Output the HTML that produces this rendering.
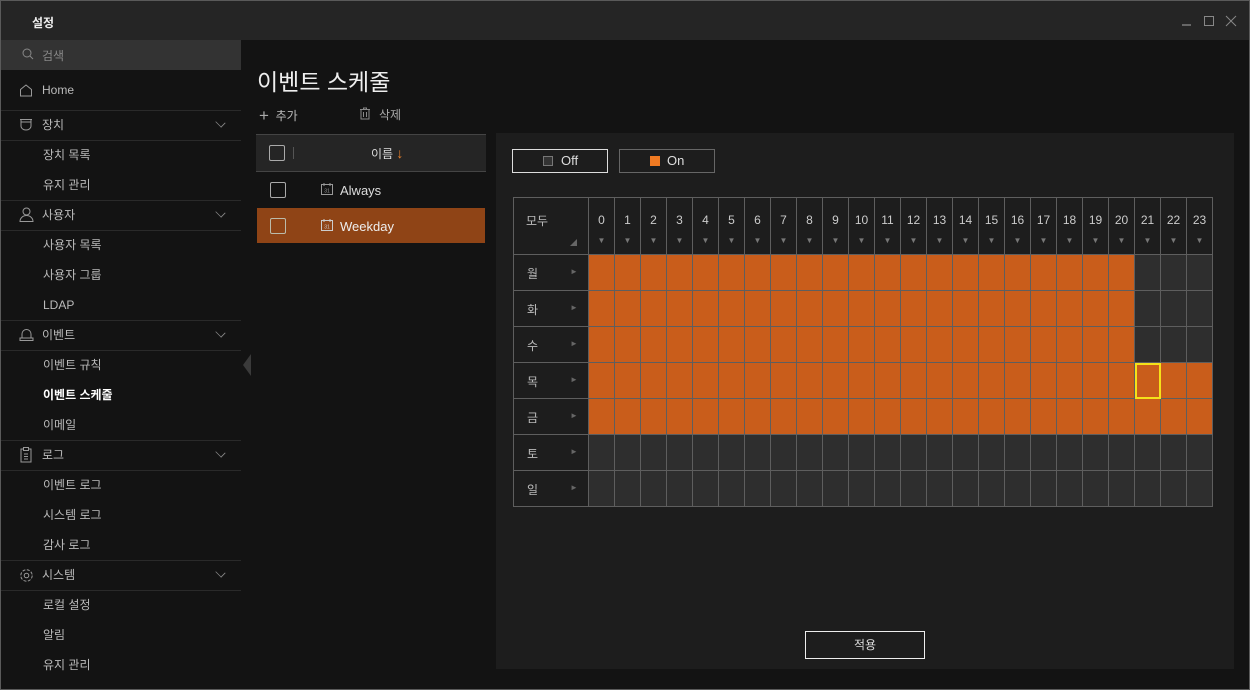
<!DOCTYPE html>
<html><head><meta charset="utf-8"><style>
*{box-sizing:border-box;margin:0;padding:0}
body{width:1250px;height:690px;background:#131313;font-family:"Liberation Sans","Noto Sans CJK KR",sans-serif;color:#ccc;position:relative;overflow:hidden;font-size:12px}
.a{position:absolute}
#win{position:absolute;left:0;top:0;width:1250px;height:690px;border:1px solid #5a5a5a;pointer-events:none}
.title{left:0;top:0;width:1250px;height:40px;background:#252525}
.side{left:0;top:40px;width:241px;height:650px;background:#131313}
.it{position:absolute;left:0;width:241px;height:30px;line-height:30px;font-size:12px;color:#bbb}
.cat{padding-left:42px}
.sub{padding-left:43px}
.ln{position:absolute;left:0;width:241px;height:1px;background:#2a2a2a}
.chev{position:absolute;right:16px;top:8px;width:9px;height:9px;border-right:1px solid #888;border-bottom:1px solid #888;transform:rotate(45deg) scale(.9,.7)}
table{border-collapse:collapse;table-layout:fixed}
td{border:1px solid #5e5e5e;padding:0}
</style></head><body>
<div class="a title"></div>
<div class="a" style="left:32px;top:14px;color:#eee;font-size:12px;font-weight:bold">설정</div>
<div class="a" style="left:1182px;top:24px;width:9px;height:2px;background:#666"></div>
<div class="a" style="left:1204px;top:16px;width:10px;height:10px;border:1px solid #888"></div>
<svg class="a" style="left:1225px;top:15px" width="12" height="12"><path d="M1 1L11 11M11 1L1 11" stroke="#888" stroke-width="1"/></svg>

<div class="a side"></div>
<div class="a" style="left:0;top:40px;width:241px;height:30px;background:#333"></div>
<svg class="a" style="left:22px;top:48px" width="12" height="12"><circle cx="5" cy="5" r="4" fill="none" stroke="#888"/><path d="M8 8L11 11" stroke="#888"/></svg>
<div class="a" style="left:42px;top:47px;color:#888;font-size:12px">검색</div>

<div class="it cat" style="top:75px">Home</div>
<svg class="a" style="left:19px;top:84px" width="14" height="13"><path d="M1.5 12V5.5L7 1 12.5 5.5V12Z" fill="none" stroke="#999"/></svg>
<div class="ln" style="top:110px"></div>
<div class="it cat" style="top:110px">장치<span class="chev"></span></div>
<svg class="a" style="left:19px;top:118px" width="14" height="14"><path d="M1 1.5H13M2 1.5V8a5 4 0 0 0 10 0V1.5M2 4H12" fill="none" stroke="#999"/></svg>
<div class="ln" style="top:140px"></div>
<div class="it sub" style="top:140px">장치 목록</div>
<div class="it sub" style="top:170px">유지 관리</div>
<div class="ln" style="top:200px"></div>
<div class="it cat" style="top:200px">사용자<span class="chev"></span></div>
<svg class="a" style="left:19px;top:207px" width="15" height="15"><circle cx="7.5" cy="4.5" r="3.5" fill="none" stroke="#999"/><path d="M1 14.5a6.5 6 0 0 1 13 0Z" fill="none" stroke="#999"/></svg>
<div class="ln" style="top:230px"></div>
<div class="it sub" style="top:230px">사용자 목록</div>
<div class="it sub" style="top:260px">사용자 그룹</div>
<div class="it sub" style="top:290px">LDAP</div>
<div class="ln" style="top:320px"></div>
<div class="it cat" style="top:320px">이벤트<span class="chev"></span></div>
<svg class="a" style="left:19px;top:328px" width="15" height="14"><path d="M3 10V6a4.5 4.5 0 0 1 9 0v4M1 12.5H14V10H1Z" fill="none" stroke="#999"/></svg>
<div class="ln" style="top:350px"></div>
<div class="it sub" style="top:350px">이벤트 규칙</div>
<div class="it sub" style="top:380px;color:#fff;font-weight:bold">이벤트 스케줄</div>
<div class="it sub" style="top:410px">이메일</div>
<div class="ln" style="top:440px"></div>
<div class="it cat" style="top:440px">로그<span class="chev"></span></div>
<svg class="a" style="left:20px;top:447px" width="12" height="16"><rect x="1" y="2" width="10" height="13" fill="none" stroke="#999"/><rect x="3.5" y="0.5" width="5" height="3" fill="#131313" stroke="#999"/><path d="M4 7H8M4 9.5H8M4 12H8" stroke="#999"/></svg>
<div class="ln" style="top:470px"></div>
<div class="it sub" style="top:470px">이벤트 로그</div>
<div class="it sub" style="top:500px">시스템 로그</div>
<div class="it sub" style="top:530px">감사 로그</div>
<div class="ln" style="top:560px"></div>
<div class="it cat" style="top:560px">시스템<span class="chev"></span></div>
<svg class="a" style="left:19px;top:568px" width="15" height="15"><circle cx="7.5" cy="7.5" r="2.3" fill="none" stroke="#999"/><circle cx="7.5" cy="7.5" r="5.7" fill="none" stroke="#999" stroke-dasharray="3 1.5"/></svg>
<div class="ln" style="top:590px"></div>
<div class="it sub" style="top:590px">로컬 설정</div>
<div class="it sub" style="top:620px">알림</div>
<div class="it sub" style="top:650px">유지 관리</div>
<svg class="a" style="left:243px;top:354px" width="8" height="22"><path d="M8 0V22L0 11Z" fill="#3a3a3a"/></svg>

<div class="a" style="left:257px;top:63px;font-size:23px;color:#eee">이벤트 스케줄</div>
<div class="a" style="left:259px;top:105px;color:#bbb;font-size:12px"><span style="font-size:17px;position:relative;top:1px;color:#aaa">+</span>&nbsp; 추가</div>
<svg class="a" style="left:359px;top:107px" width="12" height="13"><path d="M1 2.5H11M4.5 2.5V1H7.5V2.5M2 2.5V12H10V2.5M4.5 5V10M7.5 5V10" fill="none" stroke="#888"/></svg>
<div class="a" style="left:379px;top:106px;color:#aaa">삭제</div>

<div class="a" style="left:256px;top:134px;width:230px;height:38px;background:#252525;border-top:1px solid #444;border-bottom:1px solid #444"></div>
<div class="a" style="left:269px;top:145px;width:16px;height:16px;border:1px solid #aaa;border-radius:2px"></div>
<div class="a" style="left:293px;top:147px;width:1px;height:12px;background:#555"></div>
<div class="a" style="left:371px;top:145px;color:#ddd">이름 <span style="color:#e8802a;font-size:14px">↓</span></div>
<div class="a" style="left:270px;top:182px;width:16px;height:16px;border:1px solid #aaa;border-radius:2px"></div>
<svg class="a" style="left:321px;top:183px" width="12" height="12"><rect x="0.5" y="1.5" width="11" height="10" fill="none" stroke="#999"/><path d="M3 0V3M9 0V3" stroke="#999"/><text x="6" y="9.5" font-size="5" fill="#999" text-anchor="middle">31</text></svg>
<div class="a" style="left:340px;top:183px;color:#ddd;font-size:13px">Always</div>
<div class="a" style="left:257px;top:208px;width:228px;height:35px;background:#8f4416"></div>
<div class="a" style="left:270px;top:218px;width:16px;height:16px;border:1px solid #bba;border-radius:2px"></div>
<svg class="a" style="left:321px;top:219px" width="12" height="12"><rect x="0.5" y="1.5" width="11" height="10" fill="none" stroke="#ccc"/><path d="M3 0V3M9 0V3" stroke="#ccc"/><text x="6" y="9.5" font-size="5" fill="#ccc" text-anchor="middle">31</text></svg>
<div class="a" style="left:340px;top:219px;color:#eee;font-size:13px">Weekday</div>

<div class="a" style="left:496px;top:133px;width:738px;height:536px;background:#1d1d1d"></div>
<div class="a" style="left:1234px;top:40px;width:15px;height:650px;background:#131313"></div>
<div class="a" style="left:512px;top:149px;width:96px;height:24px;border:1px solid #ddd;color:#ddd;font-size:13px;line-height:22px;padding-left:30px"><span style="position:absolute;left:30px;top:6px;width:10px;height:10px;background:#333;border:1px solid #777"></span><span style="padding-left:18px">Off</span></div>
<div class="a" style="left:619px;top:149px;width:96px;height:24px;border:1px solid #666;color:#ddd;font-size:13px;line-height:22px"><span style="position:absolute;left:30px;top:6px;width:10px;height:10px;background:#f07a22"></span><span style="padding-left:47px">On</span></div>

<table class="a" style="left:513px;top:197px;width:699px" id="g"></table>
<div class="a" style="left:805px;top:631px;width:120px;height:28px;border:1px solid #eee;color:#ddd;text-align:center;line-height:26px">적용</div>
<div id="win"></div>
<script>
var d=['월','화','수','목','금','토','일'],h='<colgroup><col style="width:75px">';
for(var i=0;i<24;i++)h+='<col style="width:26px">';
h+='</colgroup><tr style="height:57px"><td style="position:relative;background:#1d1d1d"><span style="position:absolute;left:12px;top:14px;color:#bbb">모두</span><span style="position:absolute;left:56px;top:40px;color:#666;font-size:7px">◢</span></td>';
for(var i=0;i<24;i++)h+='<td style="text-align:center;color:#ccc;font-size:12px;vertical-align:top;padding-top:15px">'+i+'<div style="color:#777;font-size:8px;margin-top:9px">▼</div></td>';
h+='</tr>';
for(var r=0;r<7;r++){h+='<tr style="height:36px"><td style="position:relative;background:#1d1d1d"><span style="position:absolute;left:13px;top:10px;color:#bbb">'+d[r]+'</span><span style="position:absolute;left:56px;top:12px;color:#666;font-size:8px">►</span></td>';
for(var c=0;c<24;c++){var on=(r<3&&c<21)||r==3||r==4;var st='background:'+(on?'#c95d1b':'#2e2e2e');if(r==3&&c==21)st+=';outline:2px solid #f5e11a;outline-offset:-2px';h+='<td style="'+st+'"></td>';}
h+='</tr>';}
document.getElementById('g').innerHTML=h;
</script>
</body></html>
